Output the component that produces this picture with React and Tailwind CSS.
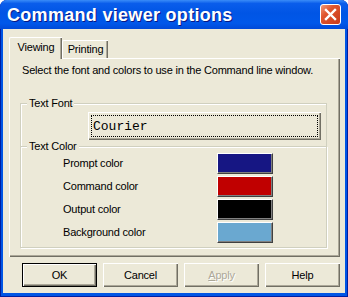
import { useState } from 'react';

const colorRows = [
  { label: 'Prompt color', swatch: 'bg-[#161683]' },
  { label: 'Command color', swatch: 'bg-[#C00000]' },
  { label: 'Output color', swatch: 'bg-[#000000]' },
  { label: 'Background color', swatch: 'bg-[#6AA8D0]' },
];

const Swatch = ({ color }) => (
  <div className={`w-[56px] h-[21px] border border-t-white border-l-white border-r-[#404040] border-b-[#404040] shadow-[inset_-1px_-1px_0_#808080] ${color}`} />
);

const DlgButton = ({ children, isDefault, disabled }) => (
  <button
    type="button"
    className={`w-[75px] h-[24px] text-[11px] bg-[#ECE9D8] ${
      isDefault
        ? 'border border-black shadow-[inset_1px_1px_0_#fff,inset_-1px_-1px_0_#716F64,inset_-2px_-2px_0_#ACA899]'
        : 'shadow-[inset_1px_1px_0_#fff,inset_-1px_-1px_0_#716F64,inset_-2px_-2px_0_#ACA899]'
    } ${disabled ? 'text-[#ACA899] [text-shadow:1px_1px_0_#fff]' : 'text-black'}`}
  >
    {children}
  </button>
);

const App = () => {
  const [tab, setTab] = useState('viewing');

  return (
    <div className="w-[348px] h-[297px] bg-white font-['Liberation_Sans',Arial,sans-serif]">
      <div className="w-full h-full flex flex-col rounded-t-[7px] bg-[#0055E5] shadow-[inset_1px_0_0_#001EA0,inset_-1px_0_0_#001EA0,inset_0_-1px_0_#001EA0]">
        {/* Title bar */}
        <div className="h-[29px] shrink-0 flex items-center justify-between pl-[7px] pr-[7px] rounded-t-[7px] bg-[linear-gradient(to_bottom,#3A8CF8_0%,#0A5DEB_12%,#0055E5_45%,#0058EA_80%,#0049D8_100%)]">
          <span className="text-white font-bold text-[18px] leading-none tracking-[0.3px] [text-shadow:1px_1px_0_#0A1883]">
            Command viewer options
          </span>
          <button type="button" className="w-[21px] h-[21px] rounded-[3px] border border-white flex items-center justify-center bg-[linear-gradient(135deg,#F19A7A_0%,#E0562E_35%,#C83A1B_100%)]">
            <svg width="13" height="13" viewBox="0 0 13 13">
              <path d="M2 2 L11 11 M11 2 L2 11" stroke="#fff" strokeWidth="2.4" strokeLinecap="square" />
            </svg>
          </button>
        </div>

        {/* Client area */}
        <div className="flex-1 mx-[3px] mb-[4px] bg-[#ECE9D8] flex flex-col text-[11px] tracking-[-0.2px] text-black">
          {/* Tabs */}
          <div className="flex items-end ml-[6px] mt-[8px]">
            <button
              type="button"
              onClick={() => setTab('viewing')}
              className="relative z-10 -mb-px w-[53px] h-[22px] pb-[3px] bg-[#ECE9D8] border-t border-l border-white rounded-tl-[2px] shadow-[inset_-1px_0_0_#716F64,inset_-2px_0_0_#ACA899] text-[11px]"
            >
              Viewing
            </button>
            <button
              type="button"
              onClick={() => setTab('printing')}
              className="w-[46px] h-[18px] bg-[#ECE9D8] border-t border-l border-white rounded-tl-[2px] shadow-[inset_-1px_0_0_#716F64,inset_-2px_0_0_#ACA899] text-[11px]"
            >
              Printing
            </button>
          </div>

          {/* Tab panel */}
          <div className="ml-[6px] w-[331px] h-[199px] border-t border-l border-white shadow-[inset_-1px_-1px_0_#716F64,inset_-2px_-2px_0_#ACA899] flex flex-col">
            <p className="pl-[12px] pt-[5px] leading-[13px]">
              Select the font and colors to use in the Command line window.
            </p>

            <fieldset className="ml-[10px] mt-[20px] w-[307px] border border-b-0 border-[#D0D0BF] shadow-[inset_1px_1px_0_#fff]">
              <legend className="ml-[6px] px-[2px] bg-[#ECE9D8] leading-[13px]">Text Font</legend>
              <div className="pl-[67px] pt-[2px] pb-[7px]">
                <button
                  type="button"
                  className="w-[233px] h-[28px] bg-[#ECE9D8] shadow-[inset_1px_1px_0_#fff,inset_-1px_-1px_0_#716F64,inset_-2px_-2px_0_#ACA899] p-[3px]"
                >
                  <span className="flex items-center h-full border border-dotted border-black pl-[1px] font-['Liberation_Mono',monospace] text-[13px] tracking-normal leading-none">
                    Courier
                  </span>
                </button>
              </div>
            </fieldset>

            <fieldset className="ml-[10px] -mt-[7px] w-[307px] border border-[#D0D0BF] shadow-[inset_1px_1px_0_#fff,1px_1px_0_#fff]">
              <legend className="ml-[6px] px-[2px] bg-[#ECE9D8] leading-[13px]">Text Color</legend>
              <div className="flex flex-col gap-[2px] pt-[0px] pb-[4px]">
                {colorRows.map((row) => (
                  <div key={row.label} className="flex items-center h-[21px]">
                    <span className="pl-[42px] w-[196px] leading-none">{row.label}</span>
                    <Swatch color={row.swatch} />
                  </div>
                ))}
              </div>
            </fieldset>
          </div>

          {/* Dialog buttons */}
          <div className="flex ml-[19px] mt-[6px] gap-[6px]">
            <DlgButton isDefault>OK</DlgButton>
            <DlgButton>Cancel</DlgButton>
            <DlgButton disabled>
              <span className="underline">A</span>pply
            </DlgButton>
            <DlgButton>Help</DlgButton>
          </div>
        </div>
      </div>
    </div>
  );
};

export default App;
